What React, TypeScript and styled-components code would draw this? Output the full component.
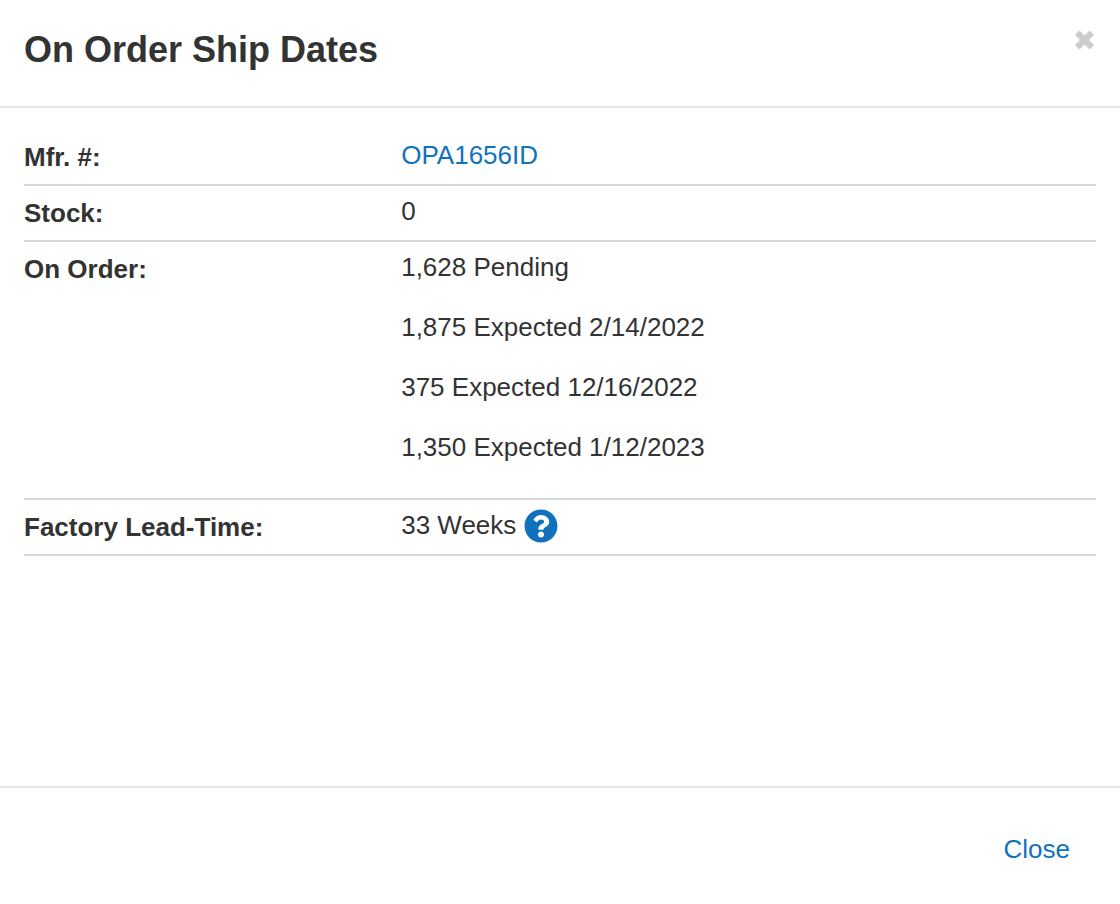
import React from "react";
import styled, { createGlobalStyle } from "styled-components";
import { FaQuestionCircle } from "react-icons/fa";

const GlobalStyle = createGlobalStyle`
  * {
    box-sizing: border-box;
  }
  body {
    margin: 0;
    background: #fff;
    color: #333;
    font-family: "Liberation Sans", Arial, Helvetica, sans-serif;
    font-size: 26px;
    line-height: 36px;
  }
`;

const Dialog = styled.section`
  display: flex;
  flex-direction: column;
  min-height: 100vh;
`;

const Header = styled.header`
  display: flex;
  align-items: flex-start;
  justify-content: space-between;
  padding: 24px 24px 30px;
  border-bottom: 2px solid #e5e5e5;
`;

const Title = styled.h1`
  margin: 0;
  font-size: 36px;
  line-height: 52px;
  font-weight: 700;
`;

const DismissButton = styled.button`
  display: flex;
  margin: 0;
  padding: 6px 0;
  border: 0;
  background: none;
  color: #ccc;
  cursor: pointer;
`;

const Body = styled.div`
  flex: 1;
  padding: 22px 24px;
`;

const Details = styled.dl`
  margin: 0;
`;

const Row = styled.div`
  display: grid;
  grid-template-columns: 35% 1fr;
  border-bottom: 2px solid #d8d8d8;
`;

const Label = styled.dt`
  padding: 9px 0;
  font-weight: 700;
`;

const Value = styled.dd`
  display: flex;
  align-items: center;
  align-self: start;
  gap: 8px;
  margin: 0;
  padding: 7px 0 9px 2px;
`;

const Link = styled.a`
  color: #1072bd;
  text-decoration: none;
`;

const Shipments = styled.ul`
  margin: 0;
  padding: 0;
  list-style: none;
`;

const Shipment = styled.li`
  margin-bottom: 24px;
`;

const HelpButton = styled.button`
  display: flex;
  padding: 1px 0 0;
  border: 0;
  background: none;
  color: #1072bd;
  cursor: pointer;
`;

const Footer = styled.footer`
  display: flex;
  justify-content: flex-end;
  padding: 33px 26px 27px;
  border-top: 2px solid #e5e5e5;
`;

const CloseButton = styled.button`
  padding: 10px 24px;
  border: 0;
  background: none;
  color: #1072bd;
  font: inherit;
  cursor: pointer;
`;

const shipments = [
  "1,628 Pending",
  "1,875 Expected 2/14/2022",
  "375 Expected 12/16/2022",
  "1,350 Expected 1/12/2023",
];

export default function App() {
  return (
    <>
      <GlobalStyle />
      <Dialog role="dialog" aria-labelledby="dialog-title">
        <Header>
          <Title id="dialog-title">On Order Ship Dates</Title>
          <DismissButton type="button" aria-label="Dismiss">
            <svg width="22" height="20" viewBox="0 0 22 20" aria-hidden="true">
              <path
                d="M3.2 2.8 17.8 17.2M17.8 2.8 3.2 17.2"
                stroke="currentColor"
                strokeWidth="6.4"
              />
            </svg>
          </DismissButton>
        </Header>
        <Body>
          <Details>
            <Row>
              <Label>Mfr. #:</Label>
              <Value>
                <Link href="#">OPA1656ID</Link>
              </Value>
            </Row>
            <Row>
              <Label>Stock:</Label>
              <Value>0</Value>
            </Row>
            <Row>
              <Label>On Order:</Label>
              <Value>
                <Shipments>
                  {shipments.map((text) => (
                    <Shipment key={text}>{text}</Shipment>
                  ))}
                </Shipments>
              </Value>
            </Row>
            <Row>
              <Label>Factory Lead-Time:</Label>
              <Value>
                33 Weeks
                <HelpButton type="button" aria-label="About factory lead-time">
                  <FaQuestionCircle size={34} aria-hidden="true" />
                </HelpButton>
              </Value>
            </Row>
          </Details>
        </Body>
        <Footer>
          <CloseButton type="button">Close</CloseButton>
        </Footer>
      </Dialog>
    </>
  );
}
